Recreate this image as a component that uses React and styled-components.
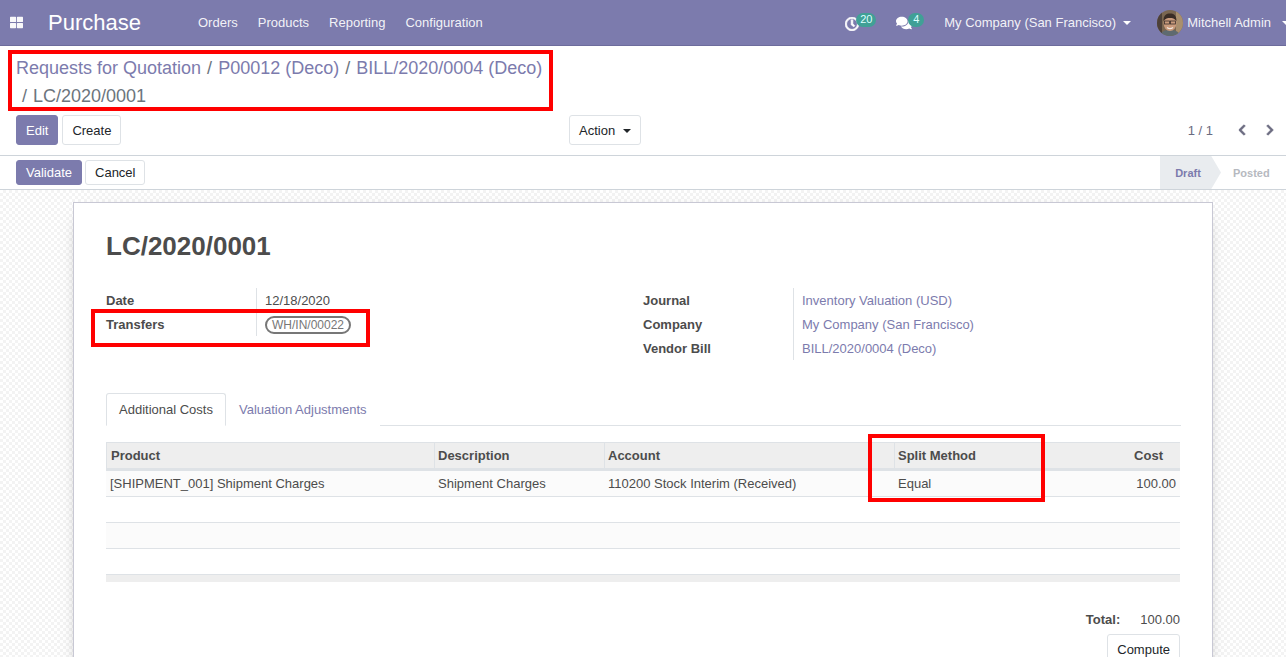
import React from 'react'
import styled, { createGlobalStyle } from 'styled-components'
import { FaThLarge, FaRegClock, FaComments, FaChevronLeft, FaChevronRight } from 'react-icons/fa'

const GlobalStyle = createGlobalStyle`
  html, body { margin: 0; height: 100%; overflow: hidden; }
  body {
    font-family: "Liberation Sans", Arial, sans-serif;
    font-size: 13px;
    color: #4c4c4c;
    background: #fff;
  }
  * { box-sizing: border-box; }
`

const columns = [
  { label: 'Product', width: 328 },
  { label: 'Description', width: 170 },
  { label: 'Account', width: 290 },
  { label: 'Split Method', width: 186 },
  { label: 'Cost', width: 100, right: true },
]

const rowValues = ['[SHIPMENT_001] Shipment Charges', 'Shipment Charges', '110200 Stock Interim (Received)', 'Equal', '100.00']

const Avatar = () => (
  <svg width="26" height="26" viewBox="0 0 26 26" style={{ borderRadius: '50%', display: 'block' }}>
    <rect width="26" height="26" fill="#7a6650" />
    <rect x="19" width="7" height="26" fill="#a98f6e" />
    <rect width="5" height="26" fill="#4d4038" />
    <path d="M3 26c1-5 5-6 10-6s9 1 10 6z" fill="#5e6a70" />
    <ellipse cx="13" cy="13" rx="6.500" ry="8" fill="#c99a7c" />
    <path d="M6.500 11c0-6 3-7.500 6.500-7.500s6.500 1.500 6.500 7.500c-2-2.500-4-3-6.500-3s-4.500.500-6.500 3z" fill="#3a2c25" />
    <rect x="7.500" y="11" width="5" height="3" fill="none" stroke="#3a302c" strokeWidth=".8" />
    <rect x="13.500" y="11" width="5" height="3" fill="none" stroke="#3a302c" strokeWidth=".8" />
    <path d="M10 17.500c2 1.500 4 1.500 6 0" stroke="#f2e8df" strokeWidth="1.100" fill="none" />
  </svg>
)

const App = () => (
  <Page>
    <GlobalStyle />
    <Navbar>
      <AppsIcon><FaThLarge size={13} /></AppsIcon>
      <Brand>Purchase</Brand>
      <Menu>
        <MenuItem>Orders</MenuItem>
        <MenuItem>Products</MenuItem>
        <MenuItem>Reporting</MenuItem>
        <MenuItem>Configuration</MenuItem>
      </Menu>
      <Systray>
        <SysIcon $width={51}>
          <FaRegClock size={14} stroke="currentColor" strokeWidth={30} />
          <Badge $left={11}>20</Badge>
        </SysIcon>
        <SysIcon $width={48}>
          <FaComments size={16} />
          <Badge $left={12}>4</Badge>
        </SysIcon>
        <Company>My Company (San Francisco)<Caret /></Company>
        <User>
          <Avatar />
          Mitchell Admin
          <Caret />
        </User>
      </Systray>
    </Navbar>

    <ControlPanel>
      <Breadcrumb>
        <Crumb>Requests for Quotation</Crumb>
        <Sep>/</Sep>
        <Crumb>P00012 (Deco)</Crumb>
        <Sep>/</Sep>
        <Crumb>BILL/2020/0004 (Deco)</Crumb>
        <Current><Sep>/</Sep>LC/2020/0001</Current>
        <RedBox $left={-8} $top={-4} $width={545} $height={61} />
      </Breadcrumb>
      <Toolbar>
        <ButtonGroup $gap={4}>
          <Button $primary $height={30}>Edit</Button>
          <Button $height={30}>Create</Button>
        </ButtonGroup>
        <ActionSlot>
          <Button $height={30}>Action<DarkCaret /></Button>
        </ActionSlot>
        <Pager>
          <PagerText>1 / 1</PagerText>
          <FaChevronLeft size={12} stroke="currentColor" strokeWidth={30} />
          <FaChevronRight size={12} stroke="currentColor" strokeWidth={30} />
        </Pager>
      </Toolbar>
    </ControlPanel>

    <StatusBar>
      <ButtonGroup $gap={3}>
        <Button $primary $height={25}>Validate</Button>
        <Button $height={25}>Cancel</Button>
      </ButtonGroup>
      <Steps>
        <Step $active>Draft</Step>
        <Step>Posted</Step>
      </Steps>
    </StatusBar>

    <Content>
      <Sheet>
        <Title>LC/2020/0001</Title>
        <InfoColumns>
          <InfoTable>
            <InfoLabel>Date</InfoLabel>
            <InfoValue>12/18/2020</InfoValue>
            <InfoLabel>Transfers</InfoLabel>
            <InfoValue><Tag>WH/IN/00022</Tag></InfoValue>
            <RedBox $left={-15} $top={21} $width={279} $height={38} />
          </InfoTable>
          <InfoTable>
            <InfoLabel>Journal</InfoLabel>
            <InfoValue $link>Inventory Valuation (USD)</InfoValue>
            <InfoLabel>Company</InfoLabel>
            <InfoValue $link>My Company (San Francisco)</InfoValue>
            <InfoLabel>Vendor Bill</InfoLabel>
            <InfoValue $link>BILL/2020/0004 (Deco)</InfoValue>
          </InfoTable>
        </InfoColumns>

        <Tabs>
          <Tab $active>Additional Costs</Tab>
          <Tab>Valuation Adjustments</Tab>
        </Tabs>

        <TableWrap>
          <HeadRow>
            {columns.map((col) => (
              <HeadCell key={col.label} $width={col.width} $right={col.right}>{col.label}</HeadCell>
            ))}
          </HeadRow>
          <Row $striped>
            {columns.map((col, i) => (
              <Cell key={col.label} $width={col.width} $right={col.right}>{rowValues[i]}</Cell>
            ))}
          </Row>
          <Row />
          <Row $striped />
          <Row />
          <TableFoot />
          <RedBox $left={762} $top={-8} $width={177} $height={68} />
        </TableWrap>

        <Totals>
          <TotalLine>
            <strong>Total:</strong>
            <span>100.00</span>
          </TotalLine>
          <Button $height={30}>Compute</Button>
        </Totals>
      </Sheet>
    </Content>
  </Page>
)

export default App

const Page = styled.div`
  height: 657px;
  overflow: hidden;
  display: flex;
  flex-direction: column;
`

const Navbar = styled.header`
  height: 46px;
  flex: none;
  display: flex;
  align-items: center;
  background: #7c7bad;
  border-bottom: 1px solid #6d6c9c;
  color: #fff;
`

const AppsIcon = styled.span`
  width: 48px;
  padding-left: 10px;
  display: flex;
  opacity: 0.95;
`

const Brand = styled.div`
  font-size: 22px;
  width: 150px;
  color: #fff;
`

const Menu = styled.nav`
  display: flex;
  gap: 20px;
  color: rgba(255, 255, 255, 0.92);
`

const MenuItem = styled.span``

const Systray = styled.div`
  margin-left: auto;
  margin-right: -4px;
  display: flex;
  align-items: center;
  color: rgba(255, 255, 255, 0.92);
`

const SysIcon = styled.span`
  position: relative;
  width: ${(p) => p.$width}px;
  height: 16px;
  display: flex;
  align-items: flex-end;
  color: #fff;
`

const Badge = styled.span`
  position: absolute;
  left: ${(p) => p.$left}px;
  top: -2px;
  padding: 1px 4px;
  min-width: 16px;
  height: 14px;
  text-align: center;
  border-radius: 8px;
  background: #40a096;
  color: #dff;
  font-size: 11px;
  line-height: 11px;
`

const Caret = styled.i`
  display: inline-block;
  margin-left: 7px;
  vertical-align: 2px;
  border-top: 4px solid #fff;
  border-left: 4px solid transparent;
  border-right: 4px solid transparent;
`

const DarkCaret = styled(Caret)`
  margin-left: 8px;
  border-top-color: #212529;
`

const Company = styled.span`
  width: 213px;
  white-space: nowrap;
`

const User = styled.span`
  display: flex;
  align-items: center;
  gap: 4px;
  white-space: nowrap;
`

const ControlPanel = styled.section`
  height: 110px;
  flex: none;
  border-bottom: 1px solid #ced4da;
  padding: 8px 16px 0;
`

const Breadcrumb = styled.div`
  position: relative;
  font-size: 18px;
  line-height: 27px;
  height: 61px;
  padding-top: 1px;
  width: 540px;
`

const Crumb = styled.span`
  color: #7c7bad;
`

const Sep = styled.span`
  color: #6c757d;
  padding: 0 6px;
`

const Current = styled.span`
  color: #6c757d;
  display: block;
  margin-top: 1px;
`

const RedBox = styled.div`
  position: absolute;
  left: ${(p) => p.$left}px;
  top: ${(p) => p.$top}px;
  width: ${(p) => p.$width}px;
  height: ${(p) => p.$height}px;
  border: 4px solid #f00;
  pointer-events: none;
`

const Toolbar = styled.div`
  display: grid;
  grid-template-columns: 553px 1fr auto;
  align-items: center;
`

const ButtonGroup = styled.div`
  display: flex;
  gap: ${(p) => p.$gap}px;
`

const ActionSlot = styled.div`
  display: flex;
`

const Button = styled.button`
  height: ${(p) => p.$height}px;
  padding: 0 9px;
  font: inherit;
  border-radius: 3px;
  border: 1px solid ${(p) => (p.$primary ? '#7c7bad' : '#dee2e6')};
  background: ${(p) => (p.$primary ? '#7c7bad' : '#fff')};
  color: ${(p) => (p.$primary ? '#fff' : '#212529')};
`

const Pager = styled.div`
  display: flex;
  align-items: center;
  gap: 16px;
  margin-right: -6px;
  color: #6b6b80;
`

const PagerText = styled.span`
  margin-right: 7px;
`

const StatusBar = styled.section`
  height: 34px;
  flex: none;
  display: flex;
  align-items: center;
  justify-content: space-between;
  padding-left: 16px;
  border-bottom: 1px solid #ced4da;
`

const Steps = styled.div`
  display: flex;
  height: 100%;
  font-size: 11px;
  font-weight: bold;
`

const Step = styled.div`
  width: ${(p) => (p.$active ? 61 : 65)}px;
  display: flex;
  align-items: center;
  justify-content: ${(p) => (p.$active ? 'center' : 'flex-start')};
  padding: ${(p) => (p.$active ? '0 5px 0 0' : '0 0 0 12px')};
  background: ${(p) => (p.$active ? '#e9ecef' : 'transparent')};
  color: ${(p) => (p.$active ? '#7c7bad' : '#b6b9c0')};
  clip-path: ${(p) => (p.$active ? 'polygon(0 0, 84% 0, 100% 50%, 84% 100%, 0 100%)' : 'none')};
`

const Content = styled.main`
  flex: 1;
  min-height: 0;
  padding: 12px 73px 0;
  background-color: #fff;
  background-image: repeating-conic-gradient(#f3f3f3 0 25%, #fff 0 50%);
  background-size: 6px 6px;
`

const Sheet = styled.div`
  width: 1140px;
  min-height: 600px;
  padding: 25px 32px 0;
  background: #fff;
  border: 1px solid #c8c8d4;
  box-shadow: 0 5px 20px -15px #000;
`

const Title = styled.h1`
  margin: 0;
  font-size: 26px;
  line-height: 36px;
  font-weight: bold;
  color: #4c4c4c;
`

const InfoColumns = styled.div`
  display: grid;
  grid-template-columns: 537px 1fr;
  margin-top: 24px;
  height: 105px;
  align-items: start;
`

const InfoTable = styled.div`
  position: relative;
  display: grid;
  grid-template-columns: 150px auto;
  grid-auto-rows: 24px;
  align-items: stretch;
`

const InfoLabel = styled.div`
  font-weight: bold;
  display: flex;
  align-items: center;
`

const InfoValue = styled.div`
  display: flex;
  align-items: center;
  padding-left: 8px;
  border-left: 1px solid #dee2e6;
  color: ${(p) => (p.$link ? '#7c7bad' : '#4c4c4c')};
`

const Tag = styled.span`
  margin-top: 2px;
  border: 2px solid #777;
  border-radius: 9px;
  padding: 0 5px;
  line-height: 14px;
  font-size: 12px;
  color: #777;
`

const Tabs = styled.div`
  display: flex;
  height: 33px;
  border-bottom: 1px solid #dee2e6;
  margin-right: -1px;
`

const Tab = styled.div`
  padding: 0 12px;
  display: flex;
  align-items: center;
  height: 33px;
  border: 1px solid ${(p) => (p.$active ? '#dee2e6' : 'transparent')};
  border-bottom-color: ${(p) => (p.$active ? '#fff' : 'transparent')};
  border-radius: 3px 3px 0 0;
  color: ${(p) => (p.$active ? '#4c4c4c' : '#7c7bad')};
  background: #fff;
`

const TableWrap = styled.div`
  position: relative;
  margin-top: 16px;
  width: 1074px;
`

const HeadRow = styled.div`
  display: flex;
  height: 29px;
  background: #eeeeee;
  border-top: 1px solid #dee2e6;
  border-left: 1px solid #dee2e6;
  border-bottom: 3px solid #dee2e6;
`

const HeadCell = styled.div`
  width: ${(p) => p.$width}px;
  padding: 0 3px;
  display: flex;
  align-items: center;
  justify-content: ${(p) => (p.$right ? 'flex-end' : 'flex-start')};
  font-weight: bold;
  border-left: 1px solid #dee2e6;
  &:first-child { border-left: 0; padding-left: 4px; width: ${(p) => p.$width - 1}px; }
  ${(p) => p.$right && 'border-left: 0; padding-right: 17px; margin-left: auto;'}
`

const Row = styled.div`
  display: flex;
  height: 26px;
  border-bottom: 1px solid #dee2e6;
  background: ${(p) => (p.$striped ? '#fbfbfb' : '#fff')};
`

const Cell = styled.div`
  width: ${(p) => p.$width}px;
  padding: 0 4px;
  display: flex;
  align-items: center;
  justify-content: ${(p) => (p.$right ? 'flex-end' : 'flex-start')};
  ${(p) => p.$right && 'margin-left: auto;'}
`

const TableFoot = styled.div`
  height: 7px;
  background: #eeeeee;
`

const Totals = styled.div`
  width: 1074px;
  margin-top: 28px;
  display: flex;
  flex-direction: column;
  align-items: flex-end;
  gap: 4px;
`

const TotalLine = styled.div`
  display: flex;
  gap: 20px;
  line-height: 20px;
`
